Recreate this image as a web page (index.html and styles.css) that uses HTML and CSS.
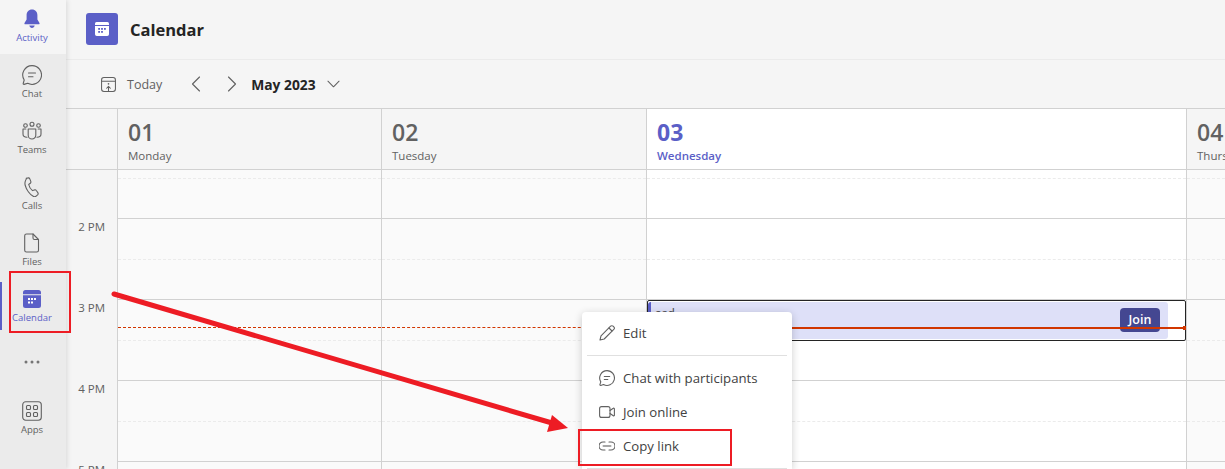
FILE: index.html
```html
<!DOCTYPE html>
<html lang="en">

<head>
    <meta charset="UTF-8">
    <title>Calendar</title>
    <link rel="stylesheet" href="styles.css">
</head>

<body>
    <nav class="rail">
        <div class="rail-item rail-first rail-on">
            <svg class="rail-icon" viewBox="0 0 20 20"><path class="fill" d="M10 .5c3.400 0 5.400 2.500 5.400 5.700v4.300l2.100 3.500c.3.600 0 1.300-.7 1.300H3.200c-.7 0-1-.7-.7-1.300l2.100-3.500V6.200C4.600 3 6.600.5 10 .5z"/><path class="fill" d="M7.300 16.600h5.400c-.3 1.400-1.400 2.400-2.700 2.400s-2.400-1-2.700-2.400z"/></svg>
            <span>Activity</span>
        </div>
        <div class="rail-item">
            <svg class="rail-icon" viewBox="0 0 20 20"><path class="line" d="M10 .6a9.400 9.400 0 1 1-4.300 17.700l-3.600 1.100c-.6.100-1-.3-.9-.9l1-3.500A9.400 9.400 0 0 1 10 .6z"/><path class="line" d="M6.500 8h7M6.500 11.800h4.500"/></svg>
            <span>Chat</span>
        </div>
        <div class="rail-item">
            <svg class="rail-icon" viewBox="0 0 20 20"><circle class="line" cx="3.500" cy="4.500" r="1.800"/><circle class="line" cx="10" cy="3.200" r="2"/><circle class="line" cx="16.500" cy="4.500" r="1.800"/><path class="line" d="M6.200 8h7.600v6.200a3.800 3.800 0 0 1-7.600 0z"/><path class="line" d="M3.800 8H1v5c0 2 1.500 3.200 4 3.200M16.200 8H19v5c0 2-1.500 3.200-4 3.200"/></svg>
            <span>Teams</span>
        </div>
        <div class="rail-item">
            <svg class="rail-icon" viewBox="0 0 20 20"><path class="line" d="M4.200 1.300 6 .9c.8-.2 1.500.2 1.800 1l1 2.500c.2.700 0 1.400-.5 1.800L6.700 7.500c.5 2.300 2 4.700 3.800 6.100l2-.7c.7-.2 1.400 0 1.800.6l1.500 2.100c.5.700.4 1.600-.2 2.200l-1.200 1.100c-.9.800-2.200 1-3.200.4-3-1.600-6.800-6.300-8.100-11.300-.5-2.200.4-5.900 2.100-6.700z"/></svg>
            <span>Calls</span>
        </div>
        <div class="rail-item">
            <svg class="rail-icon" viewBox="0 0 20 20"><path class="line" d="M4.500 1h6.500l5.500 5.500v10.700c0 1-.8 1.800-1.800 1.800H4.500c-1 0-1.800-.8-1.800-1.800V2.800C2.700 1.800 3.500 1 4.500 1z"/><path class="line" d="M11 1v4c0 .9.600 1.500 1.500 1.500h4"/></svg>
            <span>Files</span>
        </div>
        <div class="rail-item rail-on rail-current">
            <svg class="rail-icon" viewBox="0 0 20 20"><path class="fill" d="M3.500 1h13A2.500 2.500 0 0 1 19 3.500v1.700H1V3.500A2.500 2.500 0 0 1 3.500 1z"/><path class="fill" d="M1 6.200h18V16.500a2.500 2.500 0 0 1-2.500 2.500h-13A2.500 2.500 0 0 1 1 16.500z"/><g class="dots"><rect x="6" y="9" width="2" height="2"/><rect x="9" y="9" width="2" height="2"/><rect x="12" y="9" width="2" height="2"/><rect x="6" y="12.500" width="2" height="2"/><rect x="9" y="12.500" width="2" height="2"/></g></svg>
            <span>Calendar</span>
        </div>
        <div class="rail-item rail-more">
            <svg class="rail-dots" viewBox="0 0 16 4"><circle cx="2" cy="2" r="1.500"/><circle cx="8" cy="2" r="1.500"/><circle cx="14" cy="2" r="1.500"/></svg>
        </div>
        <div class="rail-item">
            <svg class="rail-icon" viewBox="0 0 20 20"><rect class="line" x=".7" y=".7" width="18.600" height="18.600" rx="3"/><rect class="line" x="4.500" y="4.500" width="4" height="4" rx="1"/><rect class="line" x="11.500" y="4.500" width="4" height="4" rx="1"/><rect class="line" x="4.500" y="11.500" width="4" height="4" rx="1"/><rect class="line" x="11.500" y="11.500" width="4" height="4" rx="1"/></svg>
            <span>Apps</span>
        </div>
    </nav>

    <main class="main">
        <header class="app-header">
            <div class="app-badge">
                <svg viewBox="0 0 16 16"><path d="M2.500 1h11A1.800 1.800 0 0 1 15 2.800V4H1V2.800A1.800 1.800 0 0 1 2.500 1z"/><path d="M1 5h14v8.200a1.800 1.800 0 0 1-1.800 1.800H2.800A1.800 1.800 0 0 1 1 13.200z"/><g class="badge-dots"><rect x="4.200" y="7" width="1.800" height="1.800"/><rect x="7.100" y="7" width="1.800" height="1.800"/><rect x="10" y="7" width="1.800" height="1.800"/><rect x="4.200" y="10" width="1.800" height="1.800"/><rect x="7.100" y="10" width="1.800" height="1.800"/></g></svg>
            </div>
            <h1>Calendar</h1>
        </header>

        <div class="toolbar">
            <div class="today-btn">
                <svg class="today-icon" viewBox="0 0 16 16"><rect class="line" x=".6" y=".6" width="14.800" height="14.800" rx="2.500"/><path class="line" d="M.6 4.500h14.800M8 15.500v-5M6 12l2-2 2 2"/><circle class="dot" cx="8" cy="7.300" r=".9"/></svg>
                <span>Today</span>
            </div>
            <svg class="chev chev-prev" viewBox="0 0 10 16"><path class="line" d="M8.500 1 1.500 8l7 7"/></svg>
            <svg class="chev chev-next" viewBox="0 0 10 16"><path class="line" d="M1.500 1l7 7-7 7"/></svg>
            <strong class="month">May 2023</strong>
            <svg class="chev-down" viewBox="0 0 14 8"><path class="line" d="M1 1l6 6 6-6"/></svg>
        </div>

        <section class="cal">
            <div class="corner"></div>
            <div class="day-head"><b>01</b><span>Monday</span></div>
            <div class="day-head"><b>02</b><span>Tuesday</span></div>
            <div class="day-head head-today"><b>03</b><span>Wednesday</span></div>
            <div class="day-head"><b>04</b><span>Thursday</span></div>

            <div class="times">
                <div>2 PM</div>
                <div>3 PM</div>
                <div>4 PM</div>
                <div>5 PM</div>
            </div>
            <div class="day">
                <div class="half top"></div><div class="hour"></div><div class="half"></div><div class="hour"></div><div class="half"></div><div class="hour"></div><div class="half"></div><div class="hour"></div>
                <div class="now-past"></div>
            </div>
            <div class="day">
                <div class="half top"></div><div class="hour"></div><div class="half"></div><div class="hour"></div><div class="half"></div><div class="hour"></div><div class="half"></div><div class="hour"></div>
                <div class="now-past"></div>
            </div>
            <div class="day day-today">
                <div class="half top"></div><div class="hour"></div><div class="half"></div><div class="hour"></div><div class="half"></div><div class="hour"></div><div class="half"></div><div class="hour"></div>
                <div class="event">
                    <div class="event-card">
                        <span class="event-name">asd</span>
                        <span class="join">Join</span>
                    </div>
                </div>
                <div class="now-line"></div>
            </div>
            <div class="day">
                <div class="half top"></div><div class="hour"></div><div class="half"></div><div class="hour"></div><div class="half"></div><div class="hour"></div><div class="half"></div><div class="hour"></div>
            </div>
        </section>
    </main>

    <div class="menu">
        <div class="menu-item">
            <svg viewBox="0 0 16 16"><path class="line" d="M1 15l1-4.200L11.600 1.200c.7-.7 1.800-.7 2.500 0l.7.7c.7.700.7 1.800 0 2.500L5.200 14z"/><path class="line" d="M10 3l3 3"/></svg>
            <span>Edit</span>
        </div>
        <div class="menu-sep"></div>
        <div class="menu-item">
            <svg viewBox="0 0 16 16"><path class="line" d="M8 .6a7.400 7.400 0 1 1-3.500 13.900l-2.800.9c-.5.100-.9-.3-.8-.8l.9-2.700A7.400 7.400 0 0 1 8 .6z"/><path class="line" d="M5.300 6.500h5.400M5.300 9.500h3.500"/></svg>
            <span>Chat with participants</span>
        </div>
        <div class="menu-item">
            <svg viewBox="0 0 16 16"><rect class="line" x=".6" y="2.600" width="10.400" height="10.800" rx="2"/><path class="line" d="M11 6.500l3.300-2.300c.4-.3 1.100 0 1.100.5v6.600c0 .5-.7.8-1.100.5L11 9.500"/></svg>
            <span>Join online</span>
        </div>
        <div class="menu-item">
            <svg viewBox="0 0 16 16"><path class="line" d="M6 4H4a4 4 0 0 0 0 8h2M10 4h2a4 4 0 0 1 0 8h-2"/><path class="thick" d="M4.500 8h7"/></svg>
            <span>Copy link</span>
        </div>
        <div class="menu-sep"></div>
    </div>

    <div class="mark mark-calendar"></div>
    <div class="mark mark-copy"></div>

    <svg class="arrow" viewBox="0 0 1225 469"><path class="arrow-shaft" d="M114 294 552 423"/><path class="arrow-head" d="M552 415 568 428 547 432z"/></svg>
</body>

</html>
```

FILE: styles.css
```css
* {
    box-sizing: border-box;
}

html,
body {
    height: 100%;
    overflow: hidden;
}

body {
    margin: 0;
    display: flex;
    font-family: "Open Sans", "Liberation Sans", sans-serif;
    background-color: #f5f5f5;
    color: #242424;
}

svg .line {
    fill: none;
    stroke: #616161;
    stroke-width: 1.100;
    stroke-linecap: round;
    stroke-linejoin: round;
}

/* left rail */
.rail {
    width: 66px;
    flex: none;
    background-color: #ebebeb;
    box-shadow: 1px 0 5px rgba(0, 0, 0, 0.12);
    position: relative;
    z-index: 1;
}

.rail-item {
    height: 56px;
    padding: 11px 2px 0 0;
    display: flex;
    flex-direction: column;
    align-items: center;
    font-size: 9.500px;
    line-height: 14px;
    color: #616161;
}

.rail-first {
    height: 54px;
    padding-top: 9px;
    background-color: #f5f5f5;
}

.rail-icon {
    width: 20px;
    height: 20px;
    margin-bottom: 2px;
}

.rail-on {
    color: #5b5fc7;
}

.rail-on .fill {
    fill: #5b5fc7;
}

.rail-on .dots {
    fill: #fff;
}

.rail-current {
    position: relative;
}

.rail-current::before {
    content: "";
    position: absolute;
    left: 0;
    top: 4px;
    width: 2px;
    height: 48px;
    background-color: #5b5fc7;
}

.rail-more {
    justify-content: center;
    padding-top: 0;
}

.rail-dots {
    width: 16px;
    height: 4px;
    fill: #757575;
}

/* header */
.main {
    flex: 1;
    min-width: 0;
    display: flex;
    flex-direction: column;
}

.app-header {
    height: 60px;
    flex: none;
    padding: 0 0 1px 20px;
    display: flex;
    align-items: center;
    gap: 12px;
    border-bottom: 1px solid #ebebeb;
}

.app-badge {
    width: 32px;
    height: 32px;
    border-radius: 3px;
    background-color: #5b5fc7;
    display: flex;
    align-items: center;
    justify-content: center;
}

.app-badge svg {
    width: 16px;
    height: 16px;
    fill: #fff;
}

.badge-dots {
    fill: #5b5fc7;
}

h1 {
    margin: 0;
    font-size: 16.500px;
    font-weight: 700;
}

.toolbar {
    height: 48px;
    flex: none;
    padding: 0 0 0 35px;
    display: flex;
    align-items: center;
    font-size: 12.500px;
}

.today-btn {
    display: flex;
    align-items: center;
    gap: 11px;
    color: #616161;
}

.today-icon {
    width: 15px;
    height: 15px;
}

.today-icon .dot {
    fill: #616161;
}

.chev {
    width: 10px;
    height: 16px;
}

.chev-prev {
    margin-left: 29px;
}

.chev-next {
    margin-left: 26px;
}

.month {
    margin-left: 14px;
    font-size: 13.800px;
    font-weight: 700;
}

.chev-down {
    width: 13px;
    height: 8px;
    margin-left: 11px;
}

/* calendar grid */
.cal {
    flex: 1;
    display: grid;
    grid-template-columns: 51px 264px 265px 540px 1fr;
    grid-template-rows: 61px 1fr;
    border-top: 1px solid #d1d1d1;
    min-height: 0;
    overflow: hidden;
}

.corner {
    border-bottom: 1px solid #d1d1d1;
}

.day-head {
    padding: 8px 0 0 10px;
    border-left: 1px solid #d1d1d1;
    border-bottom: 1px solid #d1d1d1;
    color: #616161;
    overflow: hidden;
    white-space: nowrap;
}

.day-head b {
    display: block;
    font-size: 23px;
    line-height: 31px;
    font-weight: 600;
}

.day-head span {
    display: block;
    font-size: 11.500px;
    line-height: 16px;
}

.head-today {
    background-color: #fff;
    color: #5b5fc7;
}

.head-today b {
    font-weight: 700;
}

.head-today span {
    font-weight: 600;
}

.times {
    padding: 48px 12px 0 0;
    text-align: right;
    font-size: 11.500px;
    line-height: 18px;
    color: #616161;
}

.times div {
    height: 81px;
}

.day {
    position: relative;
    border-left: 1px solid #d1d1d1;
    background-color: #fafafa;
    overflow: hidden;
}

.day-today {
    background-color: #fff;
    overflow: visible;
}

.half {
    height: 41px;
    border-bottom: 1px dashed #ebebeb;
}

.half.top {
    height: 9px;
}

.hour {
    height: 40px;
    border-bottom: 1px solid #d1d1d1;
}

.now-past {
    position: absolute;
    left: 0;
    right: 0;
    top: 157px;
    border-top: 1px dashed #d13600;
}

.now-line {
    position: absolute;
    left: -1px;
    right: 0;
    top: 157px;
    height: 2px;
    background-color: #d13600;
}

.now-line::after {
    content: "";
    position: absolute;
    right: 0;
    top: -1px;
    width: 3px;
    height: 4px;
    background-color: #d13600;
}

.event {
    position: absolute;
    left: 0;
    right: 0;
    top: 130px;
    height: 41px;
    border: 1px solid #242424;
    border-radius: 2px;
    background-color: #fff;
}

.event-card {
    height: 37px;
    width: 520px;
    margin-top: 1px;
    padding-left: 4px;
    display: flex;
    justify-content: space-between;
    border-left: 3px solid #5b5fc7;
    border-radius: 3px;
    background-color: #dee0f8;
}

.event-name {
    font-size: 12px;
    line-height: 24px;
    color: #424242;
}

.join {
    width: 40px;
    height: 24px;
    margin: 6px 8px 0 0;
    border-radius: 4px;
    background-color: #444791;
    color: #fff;
    font-size: 12.500px;
    font-weight: 600;
    line-height: 24px;
    text-align: center;
}

/* context menu */
.menu {
    position: absolute;
    left: 582px;
    top: 312px;
    width: 210px;
    height: 157px;
    padding: 4px 5px 0;
    border-radius: 4px 4px 0 0;
    background-color: #fff;
    box-shadow: 0 2px 8px rgba(0, 0, 0, 0.2);
    z-index: 2;
}

.menu-item {
    height: 34px;
    padding-left: 12px;
    display: flex;
    align-items: center;
    gap: 8px;
    font-size: 13.200px;
    color: #424242;
}

.menu-item svg {
    width: 16px;
    height: 16px;
    flex: none;
}

.menu-item .thick {
    fill: none;
    stroke: #a6a6a6;
    stroke-width: 2;
    stroke-linecap: round;
}

.menu-sep {
    height: 1px;
    margin: 5px 0;
    background-color: #e0e0e0;
}

/* red annotations */
.mark {
    position: absolute;
    border: 2px solid #ed1c24;
    z-index: 3;
}

.mark-calendar {
    left: 9px;
    top: 271px;
    width: 62px;
    height: 62px;
}

.mark-copy {
    left: 578px;
    top: 429px;
    width: 154px;
    height: 37px;
}

.arrow {
    position: absolute;
    left: 0;
    top: 0;
    width: 1225px;
    height: 469px;
    z-index: 3;
    pointer-events: none;
}

.arrow-shaft {
    fill: none;
    stroke: #ed1c24;
    stroke-width: 5;
    stroke-linecap: round;
}

.arrow-head {
    fill: #ed1c24;
}
```
